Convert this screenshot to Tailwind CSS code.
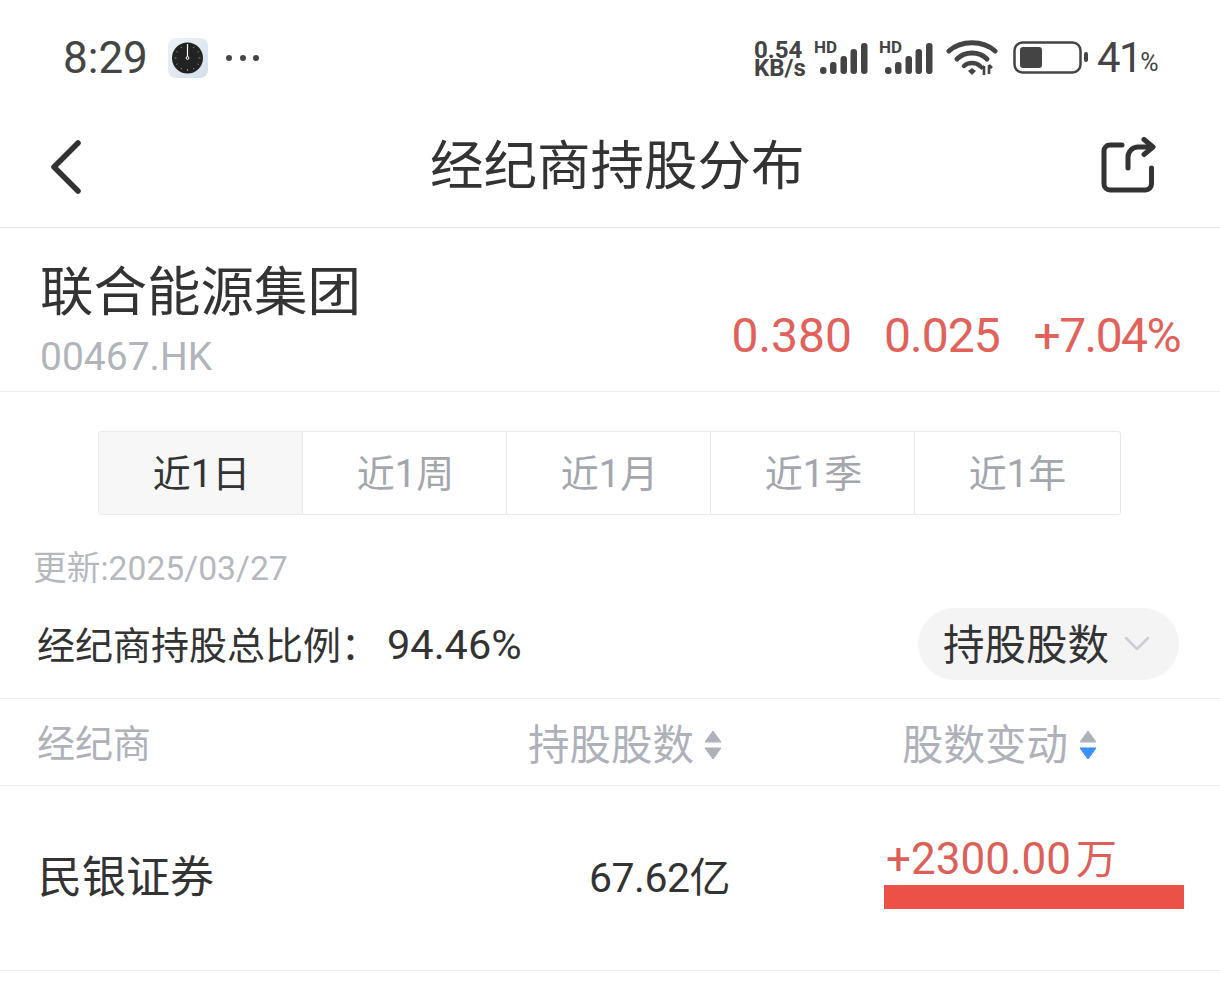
<!DOCTYPE html>
<html lang="zh-CN">
<head>
<meta charset="UTF-8">
<title>经纪商持股分布</title>
<script src="https://cdn.jsdelivr.net/npm/@tailwindcss/browser@4"></script>
</head>
<body class="bg-white overflow-hidden font-['Roboto','Noto_Sans_CJK_SC',sans-serif] text-[#333]">
<div class="w-[1220px] h-[988px] flex flex-col">
    <!-- 状态栏 -->
    <div class="h-[113px] shrink-0 flex items-center pl-[63px] pt-[3px]">
        <span class="text-[44px] leading-none text-[#444] w-[105px]">8:29</span>
        <svg class="w-[40px] h-[40px]" viewBox="0 0 40 40">
            <defs>
                <linearGradient id="clockBg" x1="0" y1="0" x2="1" y2="1">
                    <stop offset="0" stop-color="#eef2f7"/>
                    <stop offset="1" stop-color="#d3deea"/>
                </linearGradient>
            </defs>
            <rect width="40" height="40" rx="8" fill="url(#clockBg)"/>
            <circle cx="19.500" cy="20" r="15.500" fill="#222"/>
            <path d="M19.500 7v2M19.500 31v2M6.500 20h2M30.500 20h2M13 8.800l.7 1.200M26 8.800l-.7 1.200M13 31.200l.7-1.200M26 31.200l-.7-1.200M8.300 13.500l1.200.7M30.700 13.500l-1.200.7M8.300 26.500l1.200-.7M30.700 26.500l-1.200-.7" stroke="#888" stroke-width="1"/>
            <path d="M19.500 6v14" stroke="#fff" stroke-width="1.200"/>
            <circle cx="19.500" cy="20" r="1.400" fill="#222" stroke="#fff" stroke-width="1"/>
        </svg>
        <div class="flex gap-[7.500px] ml-[18px]">
            <span class="w-[6px] h-[6px] rounded-full bg-[#444]"></span>
            <span class="w-[6px] h-[6px] rounded-full bg-[#444]"></span>
            <span class="w-[6px] h-[6px] rounded-full bg-[#444]"></span>
        </div>
        <div class="ml-[495px] w-[60px] text-[#444] font-bold text-[24px] leading-[18px] pt-[1px]">
            <div>0.54</div>
            <div>KB/s</div>
        </div>
        <div class="relative w-[65px] h-[40px]">
            <span class="absolute left-0 top-[1px] text-[17px] leading-none font-bold text-[#444]">HD</span>
            <svg class="absolute left-[6px] top-[5px] w-[50px] h-[31px]" viewBox="0 0 50 31" fill="#444">
                <rect x="0" y="24" width="6.500" height="7" rx="3"/>
                <rect x="10" y="19" width="6.500" height="12" rx="3"/>
                <rect x="20.500" y="13" width="6.500" height="18" rx="3"/>
                <rect x="30.500" y="6" width="6.500" height="25" rx="3"/>
                <rect x="41" y="0" width="6.500" height="31" rx="3"/>
            </svg>
        </div>
        <div class="relative w-[68px] h-[40px]">
            <span class="absolute left-0 top-[1px] text-[17px] leading-none font-bold text-[#444]">HD</span>
            <svg class="absolute left-[6px] top-[5px] w-[50px] h-[31px]" viewBox="0 0 50 31" fill="#444">
                <rect x="0" y="24" width="6.500" height="7" rx="3"/>
                <rect x="10" y="19" width="6.500" height="12" rx="3"/>
                <rect x="20.500" y="13" width="6.500" height="18" rx="3"/>
                <rect x="30.500" y="6" width="6.500" height="25" rx="3"/>
                <rect x="41" y="0" width="6.500" height="31" rx="3"/>
            </svg>
        </div>
        <svg class="w-[52px] h-[40px] ml-[-1px]" viewBox="0 0 52 40" fill="none">
            <path d="M3 13C15 2 37 2 49 13" stroke="#444" stroke-width="5" stroke-linecap="round"/>
            <path d="M11 21C19 13 33 13 41 21" stroke="#444" stroke-width="5" stroke-linecap="round"/>
            <path d="M18 28C22 24 30 24 34 28" stroke="#444" stroke-width="4.500" stroke-linecap="round"/>
            <path d="M22 33l4-3 4 3-4 4z" fill="#444"/>
            <path d="M38 28v9M34.500 31l3.500-3M43 27v9M43 27l3 3" stroke="#444" stroke-width="2.600"/>
        </svg>
        <svg class="w-[76px] h-[34px] ml-[15px]" viewBox="0 0 76 34" fill="none">
            <rect x="1.500" y="1.500" width="66" height="30" rx="8" stroke="#444" stroke-width="2.500"/>
            <rect x="7" y="6" width="22" height="21" rx="3" fill="#444"/>
            <rect x="71" y="11" width="4" height="10" rx="2" fill="#444"/>
        </svg>
        <span class="ml-[8px] text-[42px] leading-none text-[#444] tracking-[-1.500px]">41</span>
        <span class="ml-[-1px] text-[25px] leading-none text-[#444] mt-[9px]">%</span>
    </div>
    <!-- 导航 -->
    <div class="h-[115px] shrink-0 flex items-center border-b border-[#e6e6e8] pl-[50px] pr-[64px] pb-[6px]">
        <svg class="w-[32px] h-[54px]" viewBox="0 0 32 54" fill="none">
            <path d="M28 3L4 27l24 24" stroke="#333" stroke-width="5.500" stroke-linecap="round" stroke-linejoin="round"/>
        </svg>
        <span class="ml-[348px] text-[53.500px] leading-none whitespace-nowrap">经纪商持股分布</span>
        <svg class="ml-auto w-[56px] h-[60px]" viewBox="0 0 56 60" fill="none">
            <path d="M22 8H10a6 6 0 0 0-6 6v33a6 6 0 0 0 6 6h35.500a6 6 0 0 0 6-6V31" stroke="#333" stroke-width="5" stroke-linecap="round"/>
            <path d="M28 31V20a10 10 0 0 1 10-10h14" stroke="#333" stroke-width="5" stroke-linecap="round"/>
            <path d="M44 2.500l9 7.500-9 7.500" stroke="#333" stroke-width="5" stroke-linecap="round" stroke-linejoin="round"/>
        </svg>
    </div>
    <!-- 股票信息 -->
    <div class="h-[164px] shrink-0 border-b border-[#efeff1] flex justify-between pl-[40px] pr-[40px]">
        <div class="pt-[35px]">
            <div class="text-[53.500px] leading-[60px]">联合能源集团</div>
            <div class="text-[39px] leading-[46px] mt-[11px] text-[#b1b4bb]">00467.HK</div>
        </div>
        <div class="flex gap-[34px] pt-[80px] text-[48px] leading-[56px] text-[#e2625b]">
            <span class="mr-[-2px]">0.380</span>
            <span class="tracking-[-1px]">0.025</span>
            <span class="tracking-[-1.600px]">+7.04%</span>
        </div>
    </div>
    <!-- 时间切换 -->
    <div class="mt-[39px] ml-[98px] w-[1023px] h-[84px] shrink-0 grid grid-cols-[204px_204px_204px_204px_1fr] border border-[#e9e9eb] rounded-[3px] text-[38px] text-[#a3a6ad]">
        <div class="flex items-center justify-center pt-[2px] pl-[2px] bg-[#f7f7f7] text-[#333] border-r border-[#e9e9eb]">近1日</div>
        <div class="flex items-center justify-center pt-[2px] pl-[2px] border-r border-[#e9e9eb]">近1周</div>
        <div class="flex items-center justify-center pt-[2px] pl-[2px] border-r border-[#e9e9eb]">近1月</div>
        <div class="flex items-center justify-center pt-[2px] pl-[2px] border-r border-[#e9e9eb]">近1季</div>
        <div class="flex items-center justify-center pt-[2px]">近1年</div>
    </div>
    <div class="mt-[32px] ml-[33px] text-[33.700px] leading-[44px] text-[#b6b8bd]">更新:2025/03/27</div>
    <!-- 总比例 -->
    <div class="h-[91px] shrink-0 mt-[17px] border-b border-[#efeff1] flex justify-between pl-[37px] pr-[41px] pb-[19px] items-center">
        <span class="mt-[2px] text-[38px] leading-none whitespace-nowrap">经纪商持股总比例：<span class="ml-[8px] text-[41.500px]">94.46%</span></span>
        <div class="w-[261px] h-[72px] rounded-full bg-[#f4f4f5] flex items-center pl-[25px]">
            <span class="mt-[4px] text-[41.500px] leading-none whitespace-nowrap">持股股数</span>
            <svg class="w-[26px] h-[16px] ml-[15px]" viewBox="0 0 26 16" fill="none">
                <path d="M2 2l11 11L24 2" stroke="#ccced3" stroke-width="2.500" stroke-linecap="round" stroke-linejoin="round"/>
            </svg>
        </div>
    </div>
    <!-- 表头 -->
    <div class="h-[87px] shrink-0 border-b border-[#efeff1] flex items-center pt-[4px] text-[#aeb1b9]">
        <span class="ml-[37px] w-[491px] text-[38px] leading-none">经纪商</span>
        <span class="mt-[4px] text-[41.500px] leading-none whitespace-nowrap">持股股数</span>
        <svg class="ml-[10px] mt-[2px] w-[18px] h-[30px]" viewBox="0 0 18 30">
            <path d="M9 1l8 11H1z" fill="#aeb1b9" stroke="#aeb1b9" stroke-linejoin="round"/>
            <path d="M1 18h16l-8 11z" fill="#aeb1b9" stroke="#aeb1b9" stroke-linejoin="round"/>
        </svg>
        <span class="ml-[180px] mt-[4px] text-[41.500px] leading-none whitespace-nowrap">股数变动</span>
        <svg class="ml-[11px] mt-[2px] w-[18px] h-[30px]" viewBox="0 0 18 30">
            <path d="M9 1l8 11H1z" fill="#aeb1b9" stroke="#aeb1b9" stroke-linejoin="round"/>
            <path d="M1 18h16l-8 11z" fill="#3b8ff5" stroke="#3b8ff5" stroke-linejoin="round"/>
        </svg>
    </div>
    <!-- 数据行 -->
    <div class="h-[185px] shrink-0 border-b border-[#efeff1] flex items-center">
        <span class="ml-[38px] w-[551px] text-[44px] leading-none">民银证券</span>
        <span class="w-[295px] text-[41px] leading-none whitespace-nowrap tracking-[-0.500px]">67.62亿</span>
        <div class="w-[300px] mt-[-12px]">
            <div class="ml-[2px] text-[44px] leading-[46px] text-[#dc5f58] whitespace-nowrap">+2300.00<span class="ml-[5px] text-[41px]">万</span></div>
            <div class="h-[24px] mt-[2px] bg-[#eb5146]"></div>
        </div>
    </div>
</div>
</body>
</html>
